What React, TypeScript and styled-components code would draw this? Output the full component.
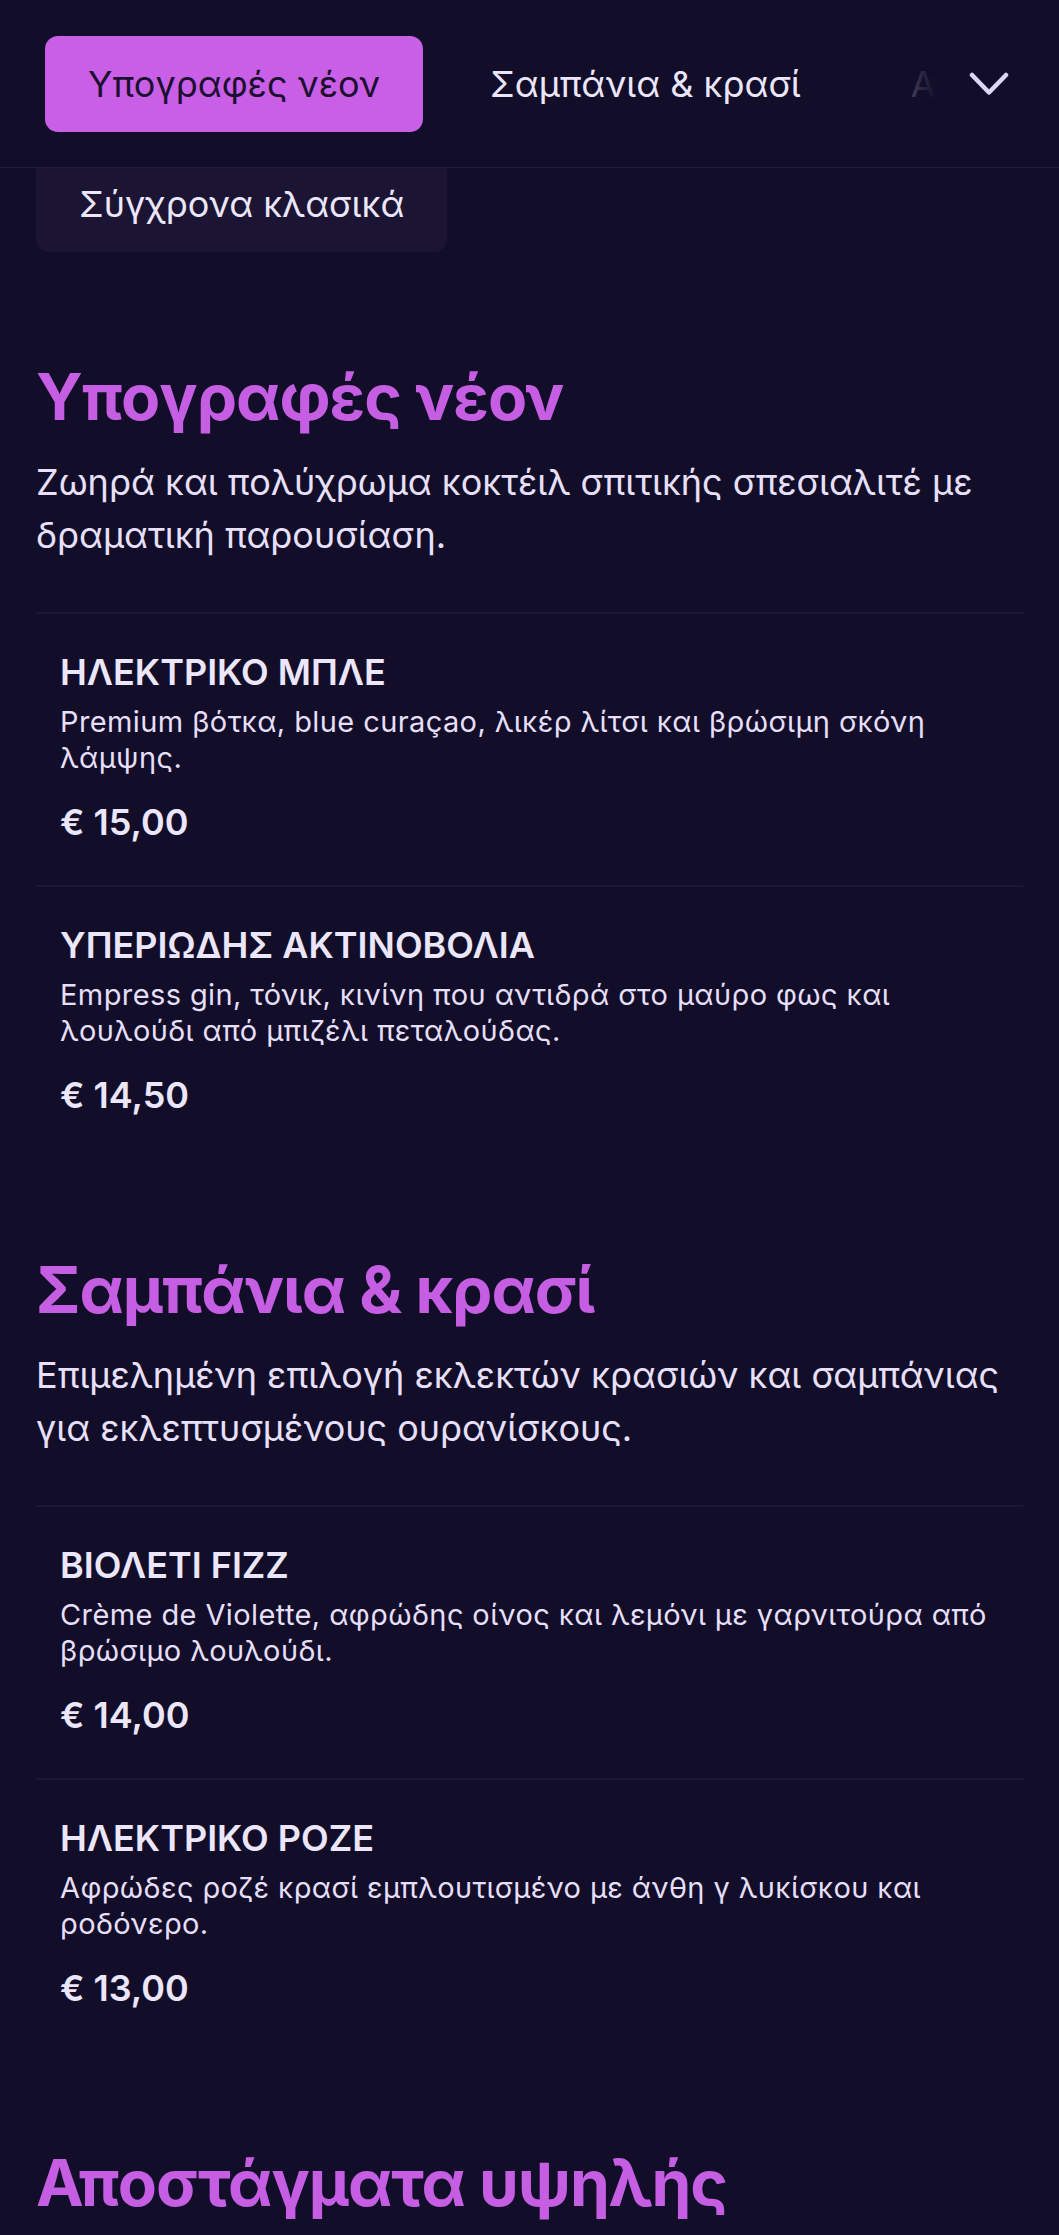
import React from "react";
import styled, { createGlobalStyle } from "styled-components";

const GlobalStyle = createGlobalStyle`
  html, body {
    margin: 0;
    padding: 0;
    background: #120e2a;
  }
  * { box-sizing: border-box; }
  body {
    font-family: Inter, "Noto Sans", "Liberation Sans", sans-serif;
    color: #ece6fb;
  }
`;

const Shell = styled.div`
  height: 100vh;
  overflow-y: auto;
  background: #120e2a;
`;

const Header = styled.header`
  position: sticky;
  top: 0;
  z-index: 2;
  background: #120e2a;
  border-bottom: 1px solid #221c3c;
`;

const TabRow = styled.nav`
  display: flex;
  gap: 24px;
  overflow: hidden;
  padding: 36px 0 35px 45px;
`;

const Tab = styled.button<{ $active?: boolean }>`
  flex: none;
  border: 0;
  margin: 0;
  font-family: inherit;
  font-size: 36px;
  line-height: 54px;
  font-weight: 400;
  padding: 21px 43px;
  border-radius: 13px;
  white-space: nowrap;
  background: ${(p) => (p.$active ? "#c95fe6" : "transparent")};
  color: ${(p) => (p.$active ? "#1c1031" : "#ece6fb")};
`;

const Fade = styled.div`
  position: absolute;
  top: 0;
  right: 0;
  bottom: 0;
  width: 236px;
  display: flex;
  align-items: center;
  justify-content: flex-end;
  padding-right: 50px;
  background: linear-gradient(
    to right,
    rgba(18, 14, 42, 0) 0px,
    rgba(18, 14, 42, 0.55) 60px,
    rgba(18, 14, 42, 0.85) 95px,
    #120e2a 114px
  );
`;

const ChevronButton = styled.button`
  border: 0;
  background: transparent;
  padding: 0;
  display: flex;
  color: #ddd5f4;
`;

const Main = styled.main`
  padding: 0 36px 80px;
`;

const SubTabs = styled.div`
  display: flex;
  gap: 24px;
  margin-top: -12px;
  padding-bottom: 13px;
`;

const SubTab = styled.button`
  border: 0;
  margin: 0;
  font-family: inherit;
  font-size: 36px;
  line-height: 54px;
  padding: 21px 43px;
  border-radius: 13px;
  background: #1b1533;
  color: #ece6fb;
  white-space: nowrap;
`;

const Section = styled.section`
  margin-top: 94px;
`;

const SectionTitle = styled.h2`
  margin: 0;
  font-size: 64px;
  line-height: 1.2;
  font-weight: 700;
  color: #c65ee3;
  letter-spacing: -1px;
`;

const SectionDesc = styled.p`
  margin: 20px -12px 50px 0;
  font-size: 36px;
  line-height: 53px;
  color: #e8e0fa;
`;

const ItemList = styled.div`
  display: flex;
  flex-direction: column;
`;

const Item = styled.article`
  border-top: 2px solid #1d1736;
  padding: 35px 12px 40px 24px;
  display: flex;
  flex-direction: column;
`;

const ItemName = styled.h3`
  margin: 0;
  font-size: 36px;
  line-height: 46px;
  font-weight: 600;
  color: #ece6fb;
`;

const ItemDesc = styled.p`
  margin: 9px 0 0;
  font-size: 29px;
  line-height: 36px;
  letter-spacing: 0.4px;
  color: #e6dff8;
`;

const Price = styled.div`
  margin-top: 23px;
  font-size: 36px;
  line-height: 46px;
  font-weight: 600;
  color: #ece6fb;
`;

type Drink = { name: string; desc: string; price: string };
type Category = { title: string; desc: string; items: Drink[] };

const categories: Category[] = [
  {
    title: "Υπογραφές νέον",
    desc: "Ζωηρά και πολύχρωμα κοκτέιλ σπιτικής σπεσιαλιτέ με δραματική παρουσίαση.",
    items: [
      {
        name: "ΗΛΕΚΤΡΙΚΟ ΜΠΛΕ",
        desc: "Premium βότκα, blue curaçao, λικέρ λίτσι και βρώσιμη σκόνη λάμψης.",
        price: "€ 15,00",
      },
      {
        name: "ΥΠΕΡΙΩΔΗΣ ΑΚΤΙΝΟΒΟΛΙΑ",
        desc: "Empress gin, τόνικ, κινίνη που αντιδρά στο μαύρο φως και λουλούδι από μπιζέλι πεταλούδας.",
        price: "€ 14,50",
      },
    ],
  },
  {
    title: "Σαμπάνια & κρασί",
    desc: "Επιμελημένη επιλογή εκλεκτών κρασιών και σαμπάνιας για εκλεπτυσμένους ουρανίσκους.",
    items: [
      {
        name: "ΒΙΟΛΕΤΙ FIZZ",
        desc: "Crème de Violette, αφρώδης οίνος και λεμόνι με γαρνιτούρα από βρώσιμο λουλούδι.",
        price: "€ 14,00",
      },
      {
        name: "ΗΛΕΚΤΡΙΚΟ ΡΟΖΕ",
        desc: "Αφρώδες ροζέ κρασί εμπλουτισμένο με άνθη γ λυκίσκου και ροδόνερο.",
        price: "€ 13,00",
      },
    ],
  },
  {
    title: "Αποστάγματα υψηλής",
    desc: "Εκλεκτά αποστάγματα από όλο τον κόσμο, σερβιρισμένα σκέτα ή με πάγο.",
    items: [
      {
        name: "ΠΑΛΑΙΩΜΕΝΟ ΟΥΙΣΚΙ",
        desc: "Single malt δωδεκαετούς παλαίωσης με νότες καπνού και βανίλιας.",
        price: "€ 16,00",
      },
    ],
  },
];

const Chevron = () => (
  <svg width="40" height="24" viewBox="0 0 40 24" fill="none" aria-hidden="true">
    <polyline
      points="3,3 20,20.5 37,3"
      stroke="currentColor"
      strokeWidth="4.5"
      strokeLinecap="round"
      strokeLinejoin="round"
    />
  </svg>
);

export default function App() {
  return (
    <>
      <GlobalStyle />
      <Shell>
        <Header>
          <TabRow>
            <Tab $active>Υπογραφές νέον</Tab>
            <Tab>Σαμπάνια &amp; κρασί</Tab>
            <Tab>Αποστάγματα υψηλής</Tab>
          </TabRow>
          <Fade>
            <ChevronButton aria-label="Περισσότερες κατηγορίες">
              <Chevron />
            </ChevronButton>
          </Fade>
        </Header>
        <Main>
          <SubTabs>
            <SubTab>Σύγχρονα κλασικά</SubTab>
          </SubTabs>
          {categories.map((c) => (
            <Section key={c.title}>
              <SectionTitle>{c.title}</SectionTitle>
              <SectionDesc>{c.desc}</SectionDesc>
              <ItemList>
                {c.items.map((d) => (
                  <Item key={d.name}>
                    <ItemName>{d.name}</ItemName>
                    <ItemDesc>{d.desc}</ItemDesc>
                    <Price>{d.price}</Price>
                  </Item>
                ))}
              </ItemList>
            </Section>
          ))}
        </Main>
      </Shell>
    </>
  );
}
